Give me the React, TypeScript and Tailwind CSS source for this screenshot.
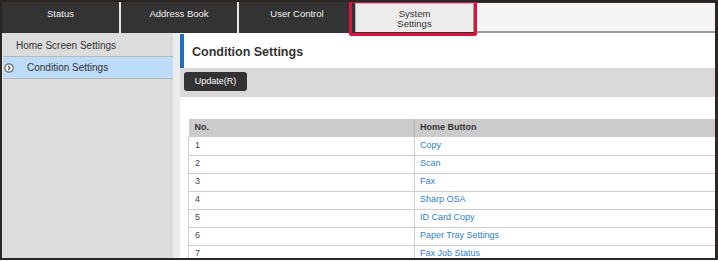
import React from 'react';

const tabs = [
  { label: 'Status', w: 'w-[119px] border-r-2' },
  { label: 'Address Book', w: 'w-[118px] border-r-2' },
  { label: 'User Control', w: 'w-[116px]' },
];

const rows = [
  'Copy',
  'Scan',
  'Fax',
  'Sharp OSA',
  'ID Card Copy',
  'Paper Tray Settings',
  'Fax Job Status',
];

const App: React.FC = () => {
  return (
    <div className="w-[718px] h-[261px] bg-white font-['Liberation_Sans',Arial,sans-serif]">
      <div className="relative w-[718px] h-[260px] border-2 border-r-[3px] border-[#2b2624] overflow-hidden flex flex-col">
        {/* Top tabs */}
        <div className="flex h-[31px] shrink-0 bg-[#333333]">
          {tabs.map((t) => (
            <div
              key={t.label}
              className={`${t.w} border-[#e6e6e6] flex justify-center pt-[6px] text-[9.5px] leading-[12px] text-[#f2f2f2]`}
            >
              {t.label}
            </div>
          ))}
          <div className="w-[120px] mt-[1px] mb-[1px] pt-[2px] bg-[#ececec] border-l border-t border-[#a9b9cc] border-r-2 border-r-[#9a9a9a] flex flex-col items-center justify-center text-[9.5px] leading-[10px] text-[#333]">
            <span>System</span>
            <span>Settings</span>
          </div>
          <div className="flex-1 bg-[#f5f5f5] mt-[1px] border-b-2 border-[#9c9c9c]" />
        </div>

        {/* Highlight box around the selected tab */}
        <div className="absolute left-[347px] top-[-2px] w-[128px] h-[36px] border-[3px] border-[#e0103c] rounded-[2px]" />

        <div className="flex flex-1 min-h-0">
          {/* Sidebar */}
          <div className="w-[171px] shrink-0 bg-[#dcdcdc] border-l border-[#e8e8e8]">
            <div className="h-[24px] border-b border-[#b8b8b8] pl-[13px] pt-[1px] flex items-center text-[10px] text-[#333]">
              Home Screen Settings
            </div>
            <div className="h-[22px] bg-[#bcdcf9] border-b border-[#b8b8b8] flex items-center text-[10px] text-[#333]">
              <svg width="10" height="10" viewBox="0 0 10 10" className="ml-[1px] mr-[13px]">
                <circle cx="5" cy="5" r="4.2" fill="#fafafa" stroke="#6b6b6b" strokeWidth="1.2" />
                <path d="M4.1 3 L6 5 L4.1 7" fill="none" stroke="#555" strokeWidth="1.2" />
              </svg>
              Condition Settings
            </div>
          </div>
          <div className="w-[7px] shrink-0 bg-[#ececec]" />

          {/* Content */}
          <div className="flex-1 min-w-0 flex flex-col bg-white overflow-hidden pt-[1px]">
            <div className="h-[34px] shrink-0 border-l-4 border-[#1f6fbd] pl-[8px] pt-[3px] flex items-center text-[12.5px] font-bold text-[#333]">
              Condition Settings
            </div>
            <div className="h-[29px] shrink-0 bg-[#d9d9d9] pl-[4px] pt-[4px]">
              <button className="h-[19px] w-[63px] rounded-[3px] bg-[#333333] text-white text-[9px] flex items-center justify-center">
                Update(R)
              </button>
            </div>

            <div className="mt-[22px] ml-[8px]">
              <table className="w-[600px] table-fixed border-collapse text-[9px]">
                <thead>
                  <tr className="h-[18px] bg-[#cbcbcb] text-[#333]">
                    <th className="w-[226px] text-left font-bold pl-[6px] border-r border-[#b5b5b5]">No.</th>
                    <th className="text-left font-bold pl-[5px]">Home Button</th>
                  </tr>
                </thead>
                <tbody>
                  {rows.map((r, i) => (
                    <tr key={r} className="h-[18px] border-b border-[#cfcfcf]">
                      <td className="pl-[6px] text-[#444] border-l border-r border-[#cfcfcf]">{i + 1}</td>
                      <td className="pl-[5px] text-[#2f7fd3]">{r}</td>
                    </tr>
                  ))}
                </tbody>
              </table>
            </div>
          </div>
        </div>
      </div>
    </div>
  );
};

export default App;
